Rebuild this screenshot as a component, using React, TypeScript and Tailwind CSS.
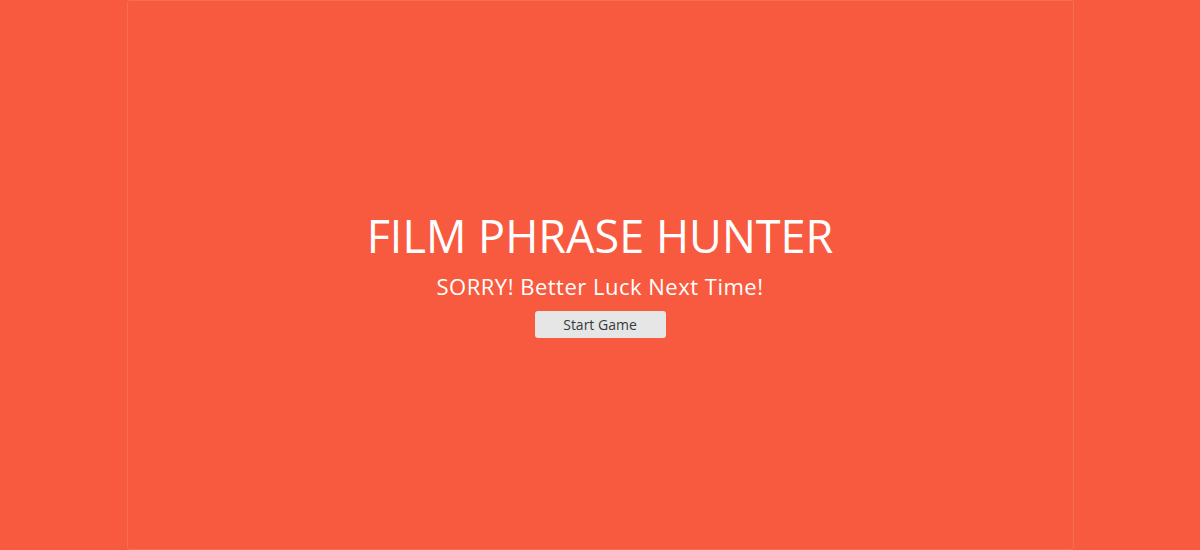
import React from 'react'

const App = () => {
  return (
    <div className="min-h-[550px] h-[550px] bg-[#f85a40] font-['Open_Sans',sans-serif]">
      <main className="mx-auto w-[947px] h-full border border-[#f96d55] rounded-[3px] flex flex-col items-center justify-center">
        <h2 className="text-white text-[45px] leading-none font-normal">FILM PHRASE HUNTER</h2>
        <h1 className="mt-[17px] text-white text-[22px] leading-none font-normal tracking-[0.5px]">SORRY! Better Luck Next Time!</h1>
        <button className="mt-[14px] w-[131px] h-[27px] bg-[#e6e6e6] rounded-[3px] text-[#333b40] text-[14px]">
          Start Game
        </button>
      </main>
    </div>
  )
}

export default App
